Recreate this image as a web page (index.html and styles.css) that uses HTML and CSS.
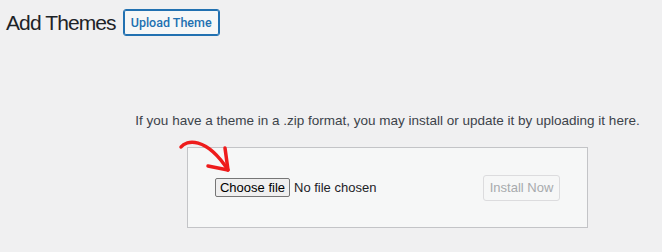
FILE: index.html
```html
<!DOCTYPE html>
<html>
<head>
<meta charset="utf-8">
<link rel="stylesheet" href="styles.css">
</head>
<body>
<div class="page">
  <div class="header">
    <h1 class="title">Add Themes</h1>
    <button class="upload-btn">Upload Theme</button>
  </div>
  <div class="upload-section">
    <p class="install-help">If you have a theme in a .zip format, you may install or update it by uploading it here.</p>
    <div class="upload-box">
      <div class="file-field">
        <span class="choose-btn">Choose file</span>
        <span class="file-status">No file chosen</span>
      </div>
      <button class="install-btn" disabled>Install Now</button>
      <svg class="arrow" width="60" height="40" viewBox="0 0 60 40">
        <path d="M3 11 C 8 4, 28 0, 50 34" fill="none" stroke="#ee1c1c" stroke-width="3.5" stroke-linecap="round"/>
        <path d="M47 12 L 50 34 L 30 30" fill="none" stroke="#ee1c1c" stroke-width="3.5" stroke-linecap="round" stroke-linejoin="round"/>
      </svg>
    </div>
  </div>
</div>
</body>
</html>
```

FILE: styles.css
```css
html, body {
  margin: 0;
  padding: 0;
  background: #f0f0f1;
}
body {
  font-family: "Liberation Sans", Arial, sans-serif;
  color: #3c434a;
  width: 662px;
  height: 252px;
  overflow: hidden;
}
.page {
  padding: 9px 0 0 6px;
}
.header {
  display: flex;
  align-items: center;
  gap: 7px;
}
.title {
  margin: 0;
  font-size: 21px;
  font-weight: 400;
  letter-spacing: -0.9px;
  color: #1d2327;
  line-height: 27px;
}
.upload-btn {
  font-family: Roboto, "Liberation Sans", Arial, sans-serif;
  font-size: 12.5px;
  font-weight: 500;
  color: #2271b1;
  background: #f6f7f7;
  border: 1px solid #2271b1;
  border-radius: 3px;
  height: 27px;
  width: 97px;
  padding: 0;
  box-shadow: 0 0 0 1px #2271b1 inset;
}
.upload-section {
  margin-left: 107px;
  width: 549px;
  text-align: center;
  padding-top: 77px;
}
.install-help {
  margin: 0;
  font-size: 13.5px;
  line-height: 16px;
  color: #3c434a;
}
.upload-box {
  position: relative;
  margin: 18px auto 0;
  height: 79px;
  background: #f6f7f7;
  border: 1px solid #c3c4c7;
  display: flex;
  align-items: center;
  justify-content: space-between;
  padding: 0 27px;
  box-sizing: content-box;
  width: 345px;
  text-align: left;
}
.file-field {
  display: flex;
  align-items: center;
  gap: 4px;
}
.choose-btn {
  display: inline-block;
  box-sizing: border-box;
  width: 75px;
  height: 19px;
  line-height: 17px;
  text-align: center;
  font-size: 13px;
  color: #000;
  background: #efefef;
  border: 1px solid #767676;
  border-radius: 2px;
}
.file-status {
  font-size: 13px;
  color: #1d2327;
}
.install-btn {
  font-family: "Liberation Sans", Arial, sans-serif;
  box-sizing: border-box;
  width: 77px;
  height: 26px;
  padding: 0;
  font-size: 13px;
  color: #a7aaad;
  background: #f6f7f7;
  border: 1px solid #dcdcde;
  border-radius: 3px;
}
.arrow {
  position: absolute;
  left: -10px;
  top: -12px;
  overflow: visible;
}
```
